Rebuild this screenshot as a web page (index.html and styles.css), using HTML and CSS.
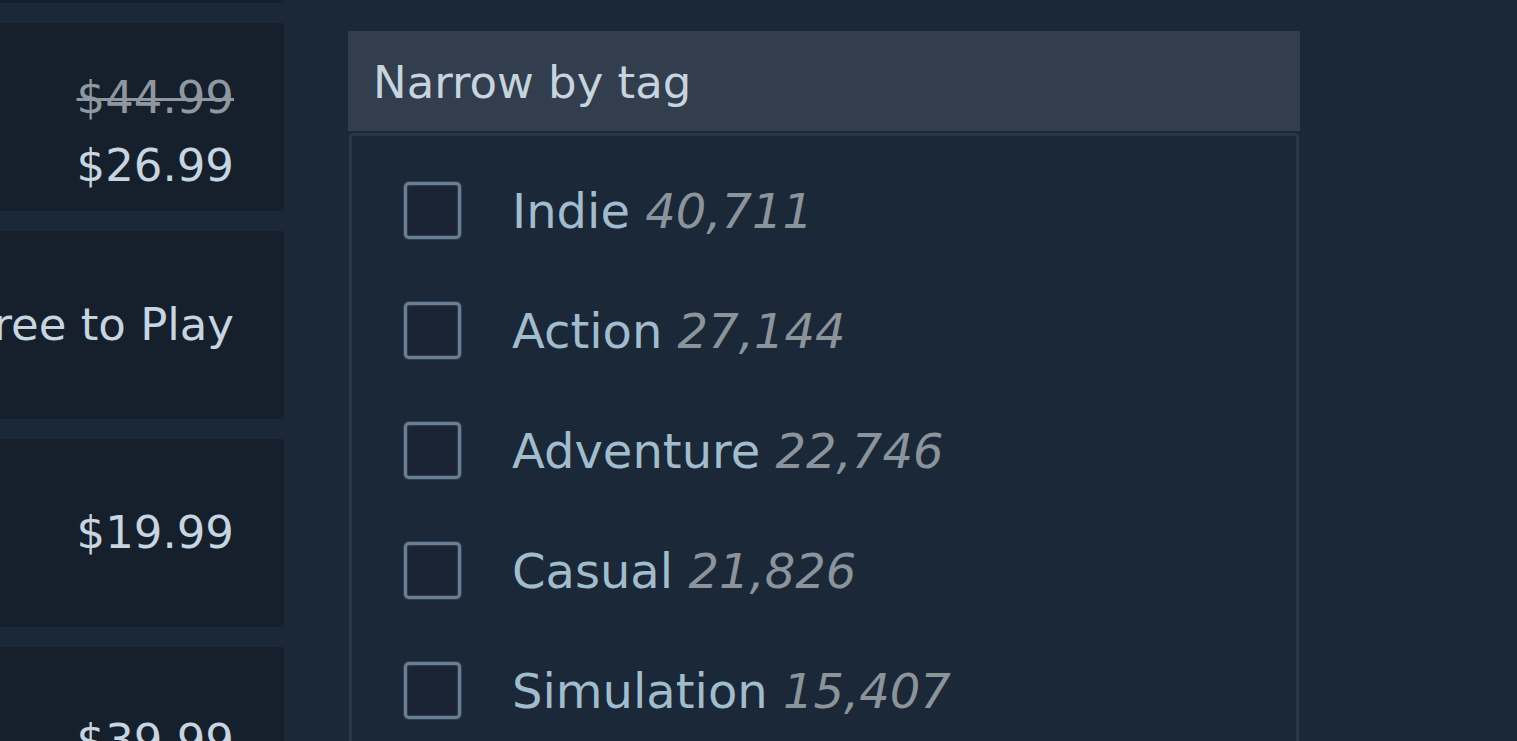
FILE: index.html
```html
<!DOCTYPE html>
<html>
<head>
<meta charset="utf-8">
<link rel="stylesheet" href="styles.css">
</head>
<body>
<div class="page">
  <div class="results">
    <div class="card"></div>
    <div class="card discounted">
      <div class="price old">$44.99</div>
      <div class="price">$26.99</div>
    </div>
    <div class="card"><div class="price">Free to Play</div></div>
    <div class="card"><div class="price">$19.99</div></div>
    <div class="card"><div class="price">$39.99</div></div>
  </div>
  <div class="sidebar">
    <div class="block-header">Narrow by tag</div>
    <div class="block-body">
      <label class="tag-row"><span class="check"></span><span class="tag-name">Indie <span class="tag-count">40,711</span></span></label>
      <label class="tag-row"><span class="check"></span><span class="tag-name">Action <span class="tag-count">27,144</span></span></label>
      <label class="tag-row"><span class="check"></span><span class="tag-name">Adventure <span class="tag-count">22,746</span></span></label>
      <label class="tag-row"><span class="check"></span><span class="tag-name">Casual <span class="tag-count">21,826</span></span></label>
      <label class="tag-row"><span class="check"></span><span class="tag-name">Simulation <span class="tag-count">15,407</span></span></label>
    </div>
  </div>
</div>
</body>
</html>
```

FILE: styles.css
```css
html, body {
  margin: 0;
  padding: 0;
  background: #1b2838;
  overflow: hidden;
  height: 741px;
}

.page {
  display: flex;
  align-items: flex-start;
  font-family: "DejaVu Sans", "Noto Sans", sans-serif;
  font-size: 45px;
  font-variant-ligatures: none;
}

.results {
  width: 400px;
  margin-left: -116px;
  margin-top: -185px;
  display: flex;
  flex-direction: column;
  gap: 20px;
}

.card {
  height: 188px;
  box-sizing: border-box;
  background: #16202d;
  display: flex;
  flex-direction: column;
  justify-content: center;
  align-items: flex-end;
  padding-right: 50px;
}

.card.discounted {
  padding-top: 30px;
}

.price {
  color: #c7d5e0;
  line-height: 68px;
}

.price.old {
  color: #8f98a0;
  text-decoration: line-through;
  text-decoration-thickness: 3px;
}

.sidebar {
  margin-left: 64px;
  margin-top: 31px;
  width: 952px;
}

.block-header {
  height: 100px;
  background: #323e4e;
  color: #c6d4df;
  display: flex;
  align-items: center;
  padding: 2px 0 0 25px;
  box-sizing: border-box;
}

.block-body {
  margin: 2px 1px 0 1px;
  border: 3px solid #2a3646;
  border-bottom: none;
  border-radius: 4px 4px 0 0;
  padding: 46px 0 0 52px;
  height: 700px;
  box-sizing: border-box;
}

.tag-row {
  display: flex;
  align-items: center;
  height: 57px;
  margin-bottom: 63px;
  font-size: 48px;
}

.check {
  width: 57px;
  height: 57px;
  box-sizing: border-box;
  border: 3px solid #687f95;
  border-radius: 5px;
  background: #1a2434;
  box-shadow: 0 0 1px 1px rgba(104, 127, 149, 0.35), inset 0 0 1px 1px rgba(104, 127, 149, 0.3);
  margin-right: 51px;
  flex: none;
}

.tag-name {
  color: #a0bccd;
  white-space: nowrap;
}

.tag-count {
  color: #8b939b;
  font-style: italic;
}
```
